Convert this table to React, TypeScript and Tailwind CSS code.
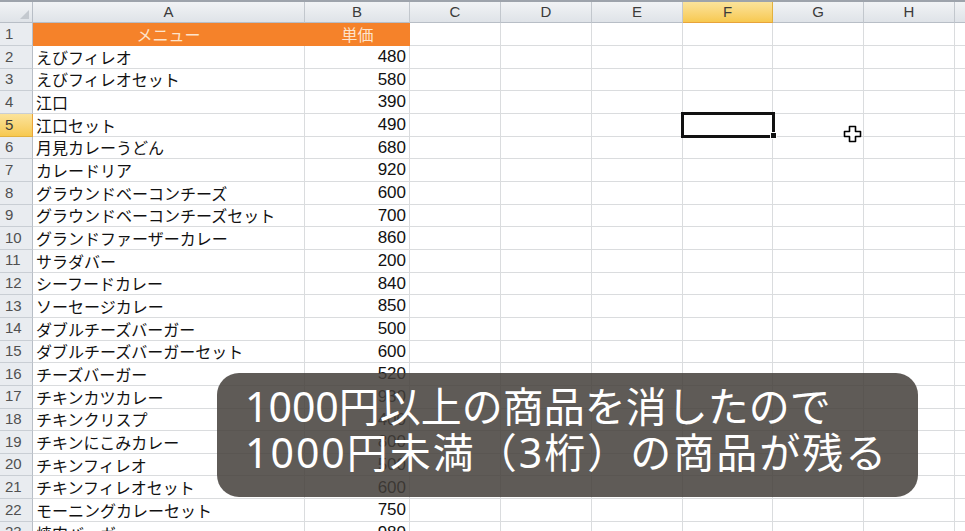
const rows: [string, string][] = [
  ["えびフィレオ", "480"],
  ["えびフィレオセット", "580"],
  ["江口", "390"],
  ["江口セット", "490"],
  ["月見カレーうどん", "680"],
  ["カレードリア", "920"],
  ["グラウンドベーコンチーズ", "600"],
  ["グラウンドベーコンチーズセット", "700"],
  ["グランドファーザーカレー", "860"],
  ["サラダバー", "200"],
  ["シーフードカレー", "840"],
  ["ソーセージカレー", "850"],
  ["ダブルチーズバーガー", "500"],
  ["ダブルチーズバーガーセット", "600"],
  ["チーズバーガー", "520"],
  ["チキンカツカレー", "930"],
  ["チキンクリスプ", "400"],
  ["チキンにこみカレー", "800"],
  ["チキンフィレオ", "500"],
  ["チキンフィレオセット", "600"],
  ["モーニングカレーセット", "750"],
  ["焼肉バーガー", "980"],
];

const cols = ["C", "D", "E", "F", "G", "H"];
const colW: Record<string, string> = {
  C: "w-[91px]",
  D: "w-[91px]",
  E: "w-[91px]",
  F: "w-[90px]",
  G: "w-[91px]",
  H: "w-[91px]",
};

const jp = "font-['Noto_Sans_CJK_JP',sans-serif]";
const num = "font-['Liberation_Sans',Arial,sans-serif]";
// caption: Latin digits a bit wider than the CJK font's own
const caption = "font-['Noto_Sans','Noto_Sans_CJK_JP',sans-serif]";

const HeaderCell = ({ label, w, active }: { label: string; w: string; active?: boolean }) => (
  <div
    className={`${w} shrink-0 h-full flex items-center justify-center border-r border-b text-[15px] ${num} ${
      active
        ? "bg-gradient-to-b from-[#fbe39a] to-[#f7c94f] border-r-[#e2b13e] border-b-[#e8a33a] text-[#3b3b3b]"
        : "bg-gradient-to-b from-[#f1f3f5] to-[#dfe3e8] border-r-[#c2c7cd] border-b-[#b8bec6] text-[#3b3b3b]"
    }`}
  >
    {label}
  </div>
);

const RowHead = ({ n, active }: { n: number; active?: boolean }) => (
  <div
    className={`w-[33px] shrink-0 h-full flex items-center pl-[5px] border-r border-b text-[15px] ${num} ${
      active
        ? "bg-gradient-to-b from-[#fbe39a] to-[#f7c94f] border-r-[#e8a33a] border-b-[#e2b13e] text-[#3b3b3b]"
        : "bg-[#e9ecf0] border-r-[#b8bec6] border-b-[#c9ced4] text-[#505050]"
    }`}
  >
    {n}
  </div>
);

const EmptyCells = () => (
  <>
    {cols.map((c) => (
      <div key={c} className={`${colW[c]} shrink-0 h-full border-r border-b border-[#dadcde]`} />
    ))}
    <div className="flex-1 h-full border-b border-[#dadcde]" />
  </>
);

export default function App() {
  return (
    <div className="relative w-[965px] h-[531px] overflow-hidden bg-white">
      <div className="h-[2px] bg-[#9da3ab]" />
      <div className="flex h-[21px]">
        <div className="w-[33px] shrink-0 h-full relative bg-gradient-to-b from-[#f1f3f5] to-[#dfe3e8] border-r border-b border-[#b8bec6]">
          <div className="absolute right-[3px] bottom-[3px] w-0 h-0 border-l-[9px] border-l-transparent border-b-[9px] border-b-[#c4c9cf]" />
        </div>
        <HeaderCell label="A" w="w-[272px]" />
        <HeaderCell label="B" w="w-[105px]" />
        {cols.map((c) => (
          <HeaderCell key={c} label={c} w={colW[c]} active={c === "F"} />
        ))}
        <div className="flex-1 h-full bg-gradient-to-b from-[#f1f3f5] to-[#dfe3e8] border-b border-[#b8bec6]" />
      </div>
      <div className="flex h-[23px]">
        <RowHead n={1} />
        <div className="w-[272px] shrink-0 h-full flex items-center justify-center bg-[#f5822a] border-r border-b border-[#f5822a] text-[16px] text-[#fde4cc]">
          <span className={jp}>メニュー</span>
        </div>
        <div className="w-[105px] shrink-0 h-full flex items-center justify-center bg-[#f5822a] border-b border-[#f5822a] text-[16px] text-[#fde4cc]">
          <span className={jp}>単価</span>
        </div>
        <EmptyCells />
      </div>
      {rows.map(([name, price], i) => (
        <div key={i} className="flex h-[22.67px]">
          <RowHead n={i + 2} active={i + 2 === 5} />
          <div className={`w-[272px] shrink-0 h-full flex items-center pl-[3px] border-r border-b border-[#dadcde] text-[16px] text-[#111] ${jp}`}>
            {name}
          </div>
          <div className={`w-[105px] shrink-0 h-full flex items-center justify-end pr-[3px] border-r border-b border-[#dadcde] text-[17px] text-[#111] ${num}`}>
            {price}
          </div>
          <EmptyCells />
        </div>
      ))}

      <div className="absolute left-[681px] top-[112px] w-[94px] h-[26px] border-[3px] border-[#111]" />
      <div className="absolute left-[770px] top-[132px] w-[7px] h-[7px] bg-[#111] border border-white" />

      <svg className="absolute left-[843px] top-[125px]" width="19" height="18" viewBox="0 0 19 18">
        <path
          d="M6.5 1.5h6v5h5v5h-5v5h-6v-5h-5v-5h5z"
          fill="#fff"
          stroke="#000"
          strokeWidth="1.6"
          strokeLinejoin="round"
        />
      </svg>

      <div className="absolute left-[217px] top-[373px] w-[701px] h-[124px] rounded-[22px] bg-[#433e3a]/85 pl-[28px] pt-[10px]">
        <p className={`text-[41px] leading-[46px] text-white whitespace-nowrap ${caption}`}>1000円以上の商品を消したので</p>
        <p className={`text-[41px] leading-[46px] tracking-[2px] text-white whitespace-nowrap ${caption}`}>1000円未満（3桁）の商品が残る</p>
      </div>
    </div>
  );
}
